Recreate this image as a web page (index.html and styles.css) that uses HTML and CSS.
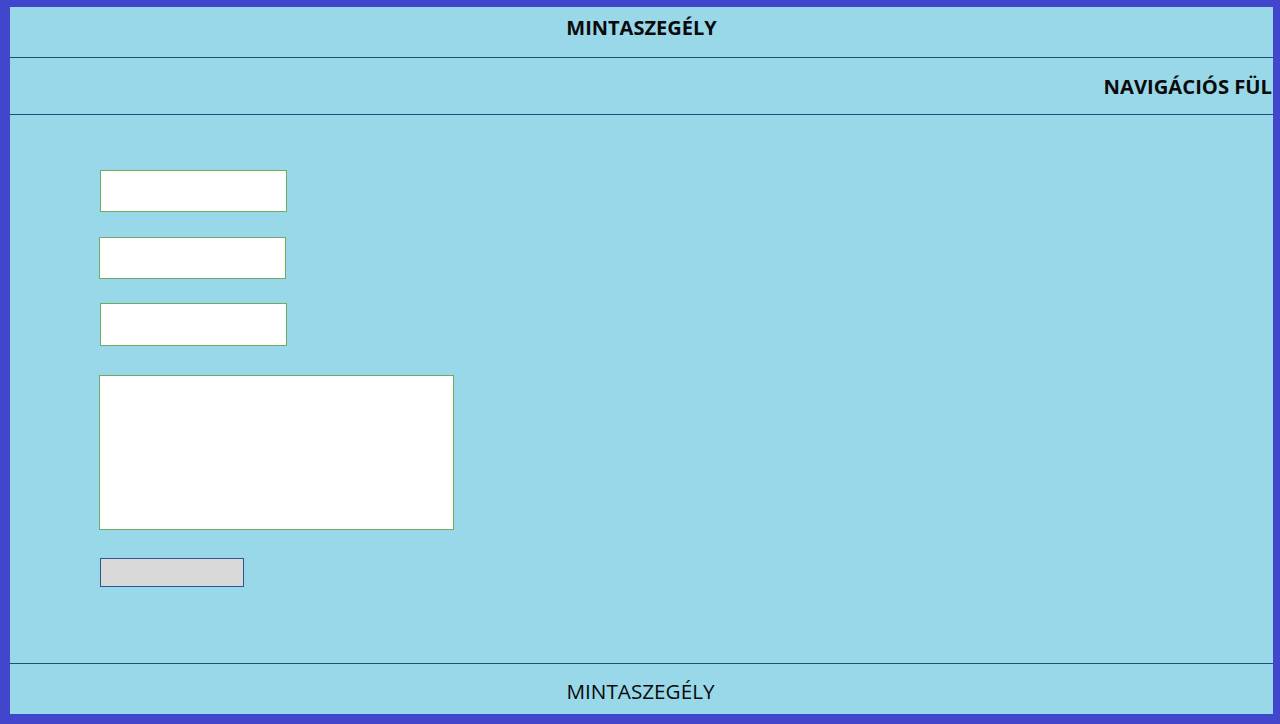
FILE: index.html
```html
<!DOCTYPE html>
<html lang="hu">
<head>
<meta charset="utf-8">
<title>Mintaszegély</title>
<link rel="stylesheet" href="styles.css">
</head>
<body>
<div class="page">
  <header class="header">MINTASZEGÉLY</header>
  <nav class="nav">NAVIGÁCIÓS FÜL</nav>
  <main class="content">
    <form class="form">
      <input class="field" type="text">
      <input class="field field-b" type="text">
      <input class="field field-c" type="text">
      <textarea class="area"></textarea>
      <button class="btn" type="button"></button>
    </form>
  </main>
  <footer class="footer">MINTASZEGÉLY</footer>
</div>
</body>
</html>
```
FILE: styles.css
```css
html, body {
  margin: 0;
  padding: 0;
  height: 100%;
}
body {
  background: #4146cd;
  font-family: "Open Sans", "Liberation Sans", sans-serif;
  color: #0a0a0a;
}
.page {
  margin: 7px 0 0 10px;
  width: 1263px;
  height: 707px;
  background: #99d8e9;
  display: flex;
  flex-direction: column;
}
.header {
  box-sizing: border-box;
  height: 51px;
  border-bottom: 1px solid #1f4e79;
  display: flex;
  align-items: center;
  justify-content: center;
  font-weight: 700;
  font-size: 20px;
  padding-bottom: 10px;
}
.nav {
  height: 56px;
  border-bottom: 1px solid #1f4e79;
  display: flex;
  align-items: center;
  justify-content: flex-end;
  font-weight: 700;
  font-size: 20.2px;
  padding-right: 1px;
}
.content {
  box-sizing: border-box;
  height: 549px;
  border-bottom: 1px solid #1f4e79;
}
.form {
  display: flex;
  flex-direction: column;
  align-items: flex-start;
  padding: 55px 0 0 90px;
}
.field {
  width: 187px;
  height: 42px;
  box-sizing: border-box;
  border: 1px solid #6fac62;
  background: #fff;
  margin: 0 0 25px 0;
  padding: 0;
  outline: none;
}
.field-b {
  margin-left: -1px;
  margin-bottom: 24px;
}
.field-c {
  height: 43px;
}
.area {
  width: 355px;
  height: 155px;
  box-sizing: border-box;
  border: 1px solid #6fac62;
  background: #fff;
  margin: 4px 0 28px -1px;
  padding: 0;
  resize: none;
  outline: none;
}
.btn {
  width: 144px;
  height: 29px;
  box-sizing: border-box;
  border: 1px solid #2f5597;
  background: #d9d9d9;
  padding: 0;
  margin: 0;
}
.footer {
  height: 50px;
  box-sizing: border-box;
  display: flex;
  align-items: center;
  justify-content: center;
  font-size: 20.7px;
  font-weight: 400;
  padding-top: 4px;
  padding-right: 2px;
}
```
